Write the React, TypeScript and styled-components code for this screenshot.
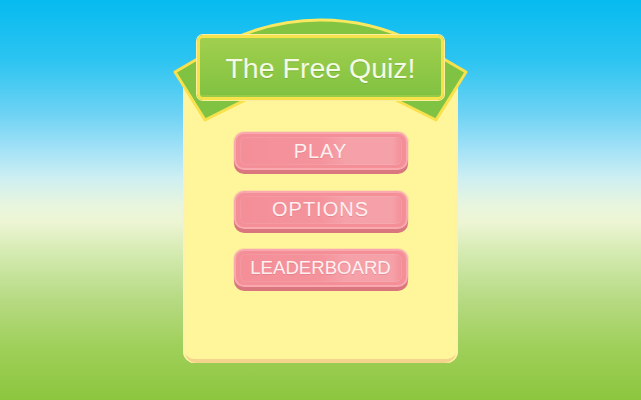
import React from "react";
import styled, { createGlobalStyle } from "styled-components";

const GlobalStyle = createGlobalStyle`
  html, body {
    margin: 0;
    padding: 0;
    width: 100%;
    height: 100%;
    overflow: hidden;
  }
  body {
    font-family: "Liberation Sans", Arial, sans-serif;
    background: linear-gradient(
      180deg,
      #06bbf0 0px,
      #2cc4f1 60px,
      #6fd3f4 115px,
      #a4e2f7 150px,
      #cdeff2 178px,
      #e8f5de 205px,
      #edf5d4 222px,
      #d5ebb2 252px,
      #b6da82 300px,
      #9ecf58 350px,
      #8cc63f 400px
    );
  }
`;

const Scene = styled.main`
  height: 400px;
  box-sizing: border-box;
  padding-top: 18px;
  display: flex;
  justify-content: center;
`;

const Card = styled.section`
  position: relative;
  width: 275px;
  display: flex;
  flex-direction: column;
`;

const Dome = styled.svg`
  position: absolute;
  top: 0;
  left: 0;
  width: 275px;
  height: 30px;
  overflow: visible;
`;

const Panel = styled.div`
  margin-top: 57px;
  height: 288px;
  box-sizing: border-box;
  background: #fff59b;
  border-radius: 0 0 12px 12px;
  box-shadow: inset 2px 0 0 #fdf2a6, inset -2px 0 0 #fdf2a6,
    inset 0 -4px 0 #f4d38c;
  display: flex;
  flex-direction: column;
  align-items: center;
`;

const BannerWrap = styled.div`
  position: relative;
  margin-top: -40px;
  width: 247px;
  height: 65px;
`;

const Wings = styled.svg`
  position: absolute;
  left: -25px;
  top: 0;
  width: 297px;
  height: 90px;
  overflow: visible;
`;

const BannerFace = styled.h1`
  position: relative;
  margin: 0;
  box-sizing: border-box;
  width: 100%;
  height: 100%;
  border: 3px solid #f6e24a;
  border-radius: 6px;
  background: linear-gradient(180deg, #a1cf4e 0%, #8fc846 55%, #80c142 100%);
  box-shadow: 0 0 0 1px #fbee9e, inset 0 -2px 0 #94cb48;
  display: flex;
  align-items: center;
  justify-content: center;
  padding-top: 2px;
  font-family: "Liberation Sans", Arial, sans-serif;
  font-weight: 400;
  font-size: 28.5px;
  color: #f4fae4;
  text-shadow: 0 1px 0 rgba(90, 140, 40, 0.35);
`;

const Menu = styled.nav`
  margin-top: 32px;
  display: flex;
  flex-direction: column;
  gap: 20.5px;
`;

const MenuButton = styled.button<{ $size: number; $spacing: number }>`
  position: relative;
  width: 174px;
  height: 38px;
  box-sizing: border-box;
  padding: 0;
  border: 2px solid #f8a8ae;
  border-radius: 10px;
  background: #f48f98;
  box-shadow: 0 4px 0 #da767e, 0 0 0 1px #fbe0a0;
  color: #fff0f1;
  font-family: "Liberation Sans", Arial, sans-serif;
  font-size: ${(p) => p.$size}px;
  letter-spacing: ${(p) => p.$spacing}px;
  text-shadow: 0 1px 0 rgba(200, 90, 100, 0.3);
  cursor: pointer;
  display: flex;
  align-items: center;
  justify-content: center;

  &::before {
    content: "";
    position: absolute;
    inset: 3px 4px 3px 4px;
    border-radius: 6px;
    background: linear-gradient(
      90deg,
      rgba(255, 255, 255, 0) 0%,
      rgba(255, 255, 255, 0.04) 50%,
      rgba(255, 255, 255, 0.16) 66%,
      rgba(255, 255, 255, 0.16) 94%,
      rgba(255, 255, 255, 0) 100%
    );
    box-shadow: inset 0 0 0 1px rgba(255, 255, 255, 0.08);
  }
`;

const Label = styled.span`
  position: relative;
`;

const items = [
  { label: "PLAY", size: 20, spacing: 1 },
  { label: "OPTIONS", size: 20, spacing: 1 },
  { label: "LEADERBOARD", size: 18.6, spacing: 0 },
];

export default function App() {
  return (
    <>
      <GlobalStyle />
      <Scene>
        <Card>
          <Dome viewBox="0 0 275 30">
            <path
              d="M 43.7 24 A 211 211 0 0 1 231.3 24 Z"
              fill="#84c443"
              stroke="#f9e862"
              strokeWidth="3"
            />
          </Dome>
          <Panel>
            <BannerWrap>
              <Wings viewBox="0 0 297 90">
                <polygon
                  points="3,37 33,85 93,55 58,5"
                  fill="#80c242"
                  stroke="#f7e14c"
                  strokeWidth="3"
                  strokeLinejoin="round"
                />
                <polygon
                  points="294,37 264,85 204,55 239,5"
                  fill="#80c242"
                  stroke="#f7e14c"
                  strokeWidth="3"
                  strokeLinejoin="round"
                />
              </Wings>
              <BannerFace>The Free Quiz!</BannerFace>
            </BannerWrap>
            <Menu>
              {items.map((it) => (
                <MenuButton key={it.label} $size={it.size} $spacing={it.spacing}>
                  <Label>{it.label}</Label>
                </MenuButton>
              ))}
            </Menu>
          </Panel>
        </Card>
      </Scene>
    </>
  );
}
